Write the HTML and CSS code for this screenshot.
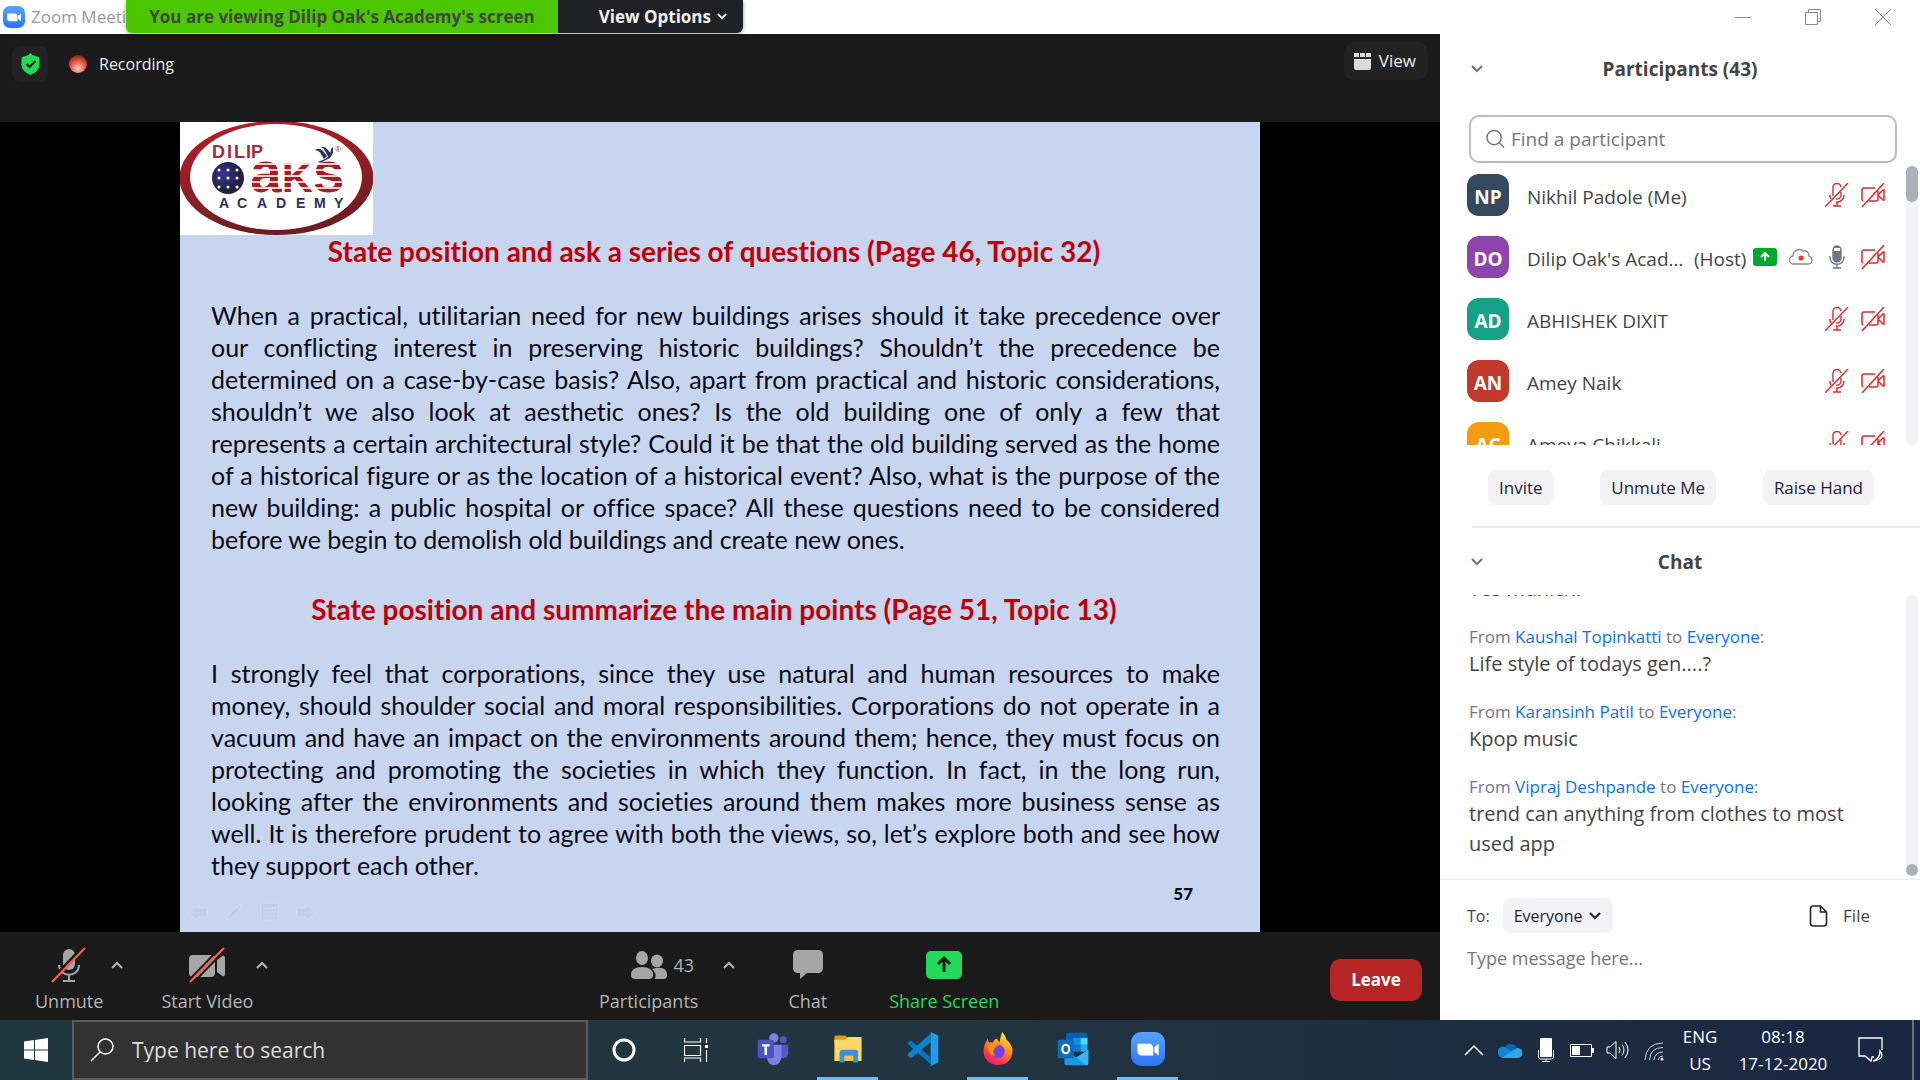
FILE: index.html
```html
<!DOCTYPE html>
<html lang="en">
<head>
<meta charset="utf-8">
<title>Zoom Meeting</title>
<link rel="stylesheet" href="styles.css">
</head>
<body>
<svg class="sprite" aria-hidden="true">
  <symbol id="mic-off" viewBox="0 0 24 24"><g fill="none" stroke="currentColor" stroke-width="1.4"><path d="M8 13V5a4 4 0 0 1 8-1M16 9v3a4 4 0 0 1-5 4M5 12v2l1 2M19 12v1a7 7 0 0 1-8 6M12 19v4M8 23h8M0 24L23 0"/></g></symbol>
  <symbol id="cam-off" viewBox="0 0 24 24"><g fill="none" stroke="currentColor" stroke-width="1.5"><path d="M2 18a2 2 0 0 1-1-2V7a2 2 0 0 1 2-2h11M17 8v8a2 2 0 0 1-2 2H8M17 12l5-5h1v10h-1l-5-5M1 24L23 0"/></g></symbol>
  <symbol id="chev-up" viewBox="0 0 12 8"><path d="M1 7l5-5 5 5" fill="none" stroke="currentColor" stroke-width="2"/></symbol>
  <symbol id="chev-down" viewBox="0 0 12 8"><path d="M1 1l5 5 5-5" fill="none" stroke="currentColor" stroke-width="2.2"/></symbol>
  <symbol id="zoom-logo" viewBox="0 0 32 32"><defs><linearGradient id="zg" x2="0" y2="1"><stop stop-color="#5aa2ff"/><stop offset="1" stop-color="#2f74f7"/></linearGradient></defs><rect width="32" height="32" rx="10" fill="url(#zg)"/><path d="M6 11h11a4 4 0 0 1 4 4v7H10a4 4 0 0 1-4-4zM22 14l4-3v11l-4-3z" fill="#fff"/></symbol>
</svg>

<header class="titlebar">
  <svg class="titlebar-logo"><use href="#zoom-logo"/></svg>
  <span class="titlebar-name">Zoom Meeting</span>
  <div class="share-banner">
    <span class="share-banner-text">You are viewing Dilip Oak's Academy's screen</span>
    <button class="share-banner-menu">View Options <svg class="tiny-chev"><use href="#chev-down"/></svg></button>
  </div>
  <div class="window-buttons">
    <button aria-label="Minimize"><svg viewBox="0 0 16 16"><path d="M0 8.500h16"/></svg></button>
    <button aria-label="Restore"><svg viewBox="0 0 16 16"><path d="M.5 3.500h12v12H.5zM3.500 3.500v-3h12v12h-3"/></svg></button>
    <button aria-label="Close"><svg viewBox="0 0 16 16"><path d="M0 0l16 16M16 0L0 16"/></svg></button>
  </div>
</header>

<main class="meeting">
  <section class="video">
    <div class="video-top">
      <button class="shield" aria-label="Meeting information"><svg viewBox="0 0 18 22"><path d="M9 0l2 2 6 2q1 0 1 2v6q0 6-9 10Q0 18 0 12V6q0-2 1-2l6-2z" fill="#23d959"/><path d="M5 11l3 3 6-6" fill="none" stroke="#1a1a1a" stroke-width="2"/></svg></button>
      <span class="rec-dot"></span>
      <span class="rec-label">Recording</span>
      <button class="view-button"><svg viewBox="0 0 17 17"><path d="M0 0h5v4H0zM6 0h5v4H6zM12 0h5v4h-5zM0 6h17v9q0 2-2 2H2q-2 0-2-2z" fill="#dcdcdc"/></svg>View</button>
    </div>

    <div class="stage">
      <article class="slide">
        <svg class="academy-logo" viewBox="0 0 193 113" role="img" aria-label="Dilip Oak's Academy">
          <defs>
            <linearGradient id="ring" x2=".3" y2="1"><stop stop-color="#b81c28"/><stop offset=".6" stop-color="#8e1f26"/><stop offset="1" stop-color="#6e1c22"/></linearGradient>
            <pattern id="stripes" width="10" height="6" patternUnits="userSpaceOnUse" y="1"><rect width="10" height="6" fill="#f0cfcf"/><rect width="10" height="4" fill="#a81c26"/></pattern>
            <radialGradient id="ball" cx=".35" cy=".4"><stop stop-color="#34349c"/><stop offset="1" stop-color="#232042"/></radialGradient>
          </defs>
          <rect width="193" height="113" fill="#fff"/>
          <ellipse cx="96.500" cy="56" rx="97" ry="57" fill="url(#ring)"/>
          <ellipse cx="96" cy="55" rx="86" ry="53" fill="#fff"/>
          <text class="logo-dilip" x="32 47 54 66 71" y="36">DILIP</text>
          <circle cx="48" cy="56" r="16" fill="url(#ball)"/>
          <g fill="#fff"><circle cx="39" cy="48" r="1.500"/><circle cx="48" cy="48" r="1.500"/><circle cx="57" cy="48" r="1.500"/><circle cx="39" cy="56" r="1.500"/><circle cx="48" cy="56" r="1.500"/><circle cx="57" cy="56" r="1.500"/><circle cx="39" cy="65" r="1.500"/><circle cx="48" cy="65" r="1.500"/><circle cx="57" cy="65" r="1.500"/></g>
          <text class="logo-aks" x="70" y="70">a<tspan class="logo-k">K</tspan>s</text>
          <path d="M135 28q4-3 8 1l4 5-3 3-3-5q-1-3-6-4zM141 25q4-1 7 3l4 5-3 3-4-7q-1-3-4-4zM145 37l5-4 1-6 2-2v6l-3 5-8 4q-2 1-4 0z" fill="#26335c"/>
          <text class="logo-reg" x="155" y="30">®</text>
          <text class="logo-academy" x="39 57 77 96 116 134 154" y="86">ACADEMY</text>
        </svg>
        <h2>State position and ask a series of questions (Page 46, Topic 32)</h2>
        <p>
          <span>When a practical, utilitarian need for new buildings arises should it take precedence over</span>
          <span>our conflicting interest in preserving historic buildings? Shouldn’t the precedence be</span>
          <span>determined on a case-by-case basis? Also, apart from practical and historic considerations,</span>
          <span>shouldn’t we also look at aesthetic ones? Is the old building one of only a few that</span>
          <span>represents a certain architectural style? Could it be that the old building served as the home</span>
          <span>of a historical figure or as the location of a historical event? Also, what is the purpose of the</span>
          <span>new building: a public hospital or office space? All these questions need to be considered</span>
          <span>before we begin to demolish old buildings and create new ones.</span>
        </p>
        <h2>State position and summarize the main points (Page 51, Topic 13)</h2>
        <p>
          <span>I strongly feel that corporations, since they use natural and human resources to make</span>
          <span>money, should shoulder social and moral responsibilities. Corporations do not operate in a</span>
          <span>vacuum and have an impact on the environments around them; hence, they must focus on</span>
          <span>protecting and promoting the societies in which they function. In fact, in the long run,</span>
          <span>looking after the environments and societies around them makes more business sense as</span>
          <span>well. It is therefore prudent to agree with both the views, so, let’s explore both and see how</span>
          <span>they support each other.</span>
        </p>
        <footer class="slide-foot">
          <svg class="slide-tools" viewBox="0 0 128 24"><g fill="#c1ceea" stroke="#d0dbf3"><path d="M1 12l9-8v4h9v9h-9v4zM54 4l-5 9-11 8 6-10zM73 3h17v17H73zM127 12l-9-8v4h-9v9h9v4z"/><path d="M75 8h13M75 12h13M75 16h13"/></g></svg>
          <span class="page-number">57</span>
        </footer>
      </article>
    </div>

    <nav class="toolbar">
      <div class="tool-group">
        <button class="tool"><svg class="tool-icon" viewBox="0 0 36 36"><path d="M18 2a6 6 0 0 1 6 6v9a6 6 0 0 1-12 0V8a6 6 0 0 1 6-6z" fill="#a6a6a6"/><path d="M8 18c0 13 20 13 20 0M18 28v6M12 34h12" fill="none" stroke="#a6a6a6" stroke-width="2"/><path d="M0 33L32 0" stroke="#1a1a1a" stroke-width="3"/><path d="M1 35L34 1" stroke="#ff5a55" stroke-width="2.200"/></svg>Unmute</button>
        <button class="tool-more gap-a" aria-label="Audio options"><svg><use href="#chev-up"/></svg></button>
        <button class="tool gap-b"><svg class="tool-icon" viewBox="0 0 36 36"><path d="M0 12q0-4 4-4h18q4 0 4 4v14q0 4-4 4H4q-4 0-4-4zM28 13l4-3q4-3 4 1v16q0 4-4 1l-4-3z" fill="#a6a6a6"/><path d="M0 33L32 0M4 36L36 3" stroke="#1a1a1a" stroke-width="2"/><path d="M1 35L35 1" stroke="#ff5a55" stroke-width="2.200"/></svg>Start Video</button>
        <button class="tool-more gap-c" aria-label="Video options"><svg><use href="#chev-up"/></svg></button>
      </div>
      <div class="tool-group">
        <button class="tool"><span class="tool-count"><svg class="tool-icon" viewBox="0 0 36 36"><g fill="#a6a6a6"><ellipse cx="11" cy="11" rx="6" ry="7"/><ellipse cx="26" cy="14" rx="6" ry="6.500"/><path d="M0 28q0-8 11-8t11 8q0 4-4 4H4q-4 0-4-4zM21 22q15-4 15 6 0 4-3 4h-9q2-6-3-10z"/></g></svg>43</span>Participants</button>
        <button class="tool-more gap-d" aria-label="Participant options"><svg><use href="#chev-up"/></svg></button>
        <button class="tool gap-e"><svg class="tool-icon" viewBox="0 0 36 36"><path d="M8 3h20q5 0 5 5v13q0 5-5 5H17l-7 6v-6H8q-5 0-5-5V8q0-5 5-5z" fill="#a6a6a6"/></svg>Chat</button>
        <button class="tool share gap-f"><svg class="tool-icon" viewBox="0 0 36 36"><rect y="4" width="36" height="28" rx="5" fill="#23d959"/><path d="M18 25V12M12 17l6-6 6 6" fill="none" stroke="#1a1a1a" stroke-width="3"/></svg>Share Screen</button>
      </div>
      <button class="leave">Leave</button>
    </nav>
  </section>

  <aside class="side">
    <section class="people">
      <header class="side-head"><button aria-label="Collapse participants"><svg class="head-chev"><use href="#chev-down"/></svg></button><h3>Participants (43)</h3></header>
      <label class="find"><svg viewBox="0 0 20 20"><circle cx="8.500" cy="8.500" r="7.500"/><path d="M14 14l5 5"/></svg><input type="text" placeholder="Find a participant" aria-label="Find a participant"></label>
      <div class="scroll-area people-scroll">
        <ul class="people-list">
          <li><span class="avatar navy">NP</span><span class="name">Nikhil Padole (Me)</span><svg class="mute"><use href="#mic-off"/></svg><svg class="mute"><use href="#cam-off"/></svg></li>
          <li><span class="avatar purple">DO</span><span class="name host">Dilip Oak's Academy</span><span class="role">(Host)</span>
            <svg class="status" viewBox="0 0 24 18"><rect width="24" height="18" rx="3" fill="#00a82d"/><path d="M12 13V6M8 9l4-4 4 4" fill="none" stroke="#fff" stroke-width="2"/></svg>
            <svg class="status" viewBox="0 0 24 18"><path d="M5 16a4 4 0 0 1-1-8c0-6 7-8 10-5 4-1 6 2 6 5 4 2 4 8-1 8z" fill="none" stroke="#85858f" stroke-width="1.300"/><circle cx="12" cy="10" r="2.500" fill="#fa3232"/></svg>
            <svg class="mute grey" viewBox="0 0 24 24"><path d="M8 5a4 4 0 0 1 8 0v8a4 4 0 0 1-8 0z" fill="#747487"/><path d="M9 3h6v3H9z" fill="#fff"/><path d="M8 5a4 4 0 0 1 8 0v8a4 4 0 0 1-8 0zM5 11c-1 11 15 11 14 0M12 19v4M8 23h8" fill="none" stroke="#747487" stroke-width="1.300"/></svg>
            <svg class="mute"><use href="#cam-off"/></svg></li>
          <li><span class="avatar teal">AD</span><span class="name">ABHISHEK DIXIT</span><svg class="mute"><use href="#mic-off"/></svg><svg class="mute"><use href="#cam-off"/></svg></li>
          <li><span class="avatar red">AN</span><span class="name">Amey Naik</span><svg class="mute"><use href="#mic-off"/></svg><svg class="mute"><use href="#cam-off"/></svg></li>
          <li><span class="avatar orange">AC</span><span class="name">Ameya Chikkali</span><svg class="mute"><use href="#mic-off"/></svg><svg class="mute"><use href="#cam-off"/></svg></li>
        </ul>
        <div class="track"><div class="thumb"></div></div>
      </div>
      <div class="people-actions"><button class="pill">Invite</button><button class="pill">Unmute Me</button><button class="pill">Raise Hand</button></div>
    </section>

    <section class="chat">
      <header class="side-head chat-head"><button aria-label="Collapse chat"><svg class="head-chev"><use href="#chev-down"/></svg></button><h3>Chat</h3></header>
      <div class="scroll-area chat-scroll">
        <div class="messages">
          <div class="message"><p>Yes munich.</p></div>
          <div class="message"><div class="from">From <a href="#">Kaushal Topinkatti</a> to <a href="#">Everyone</a>:</div><p>Life style of todays gen....?</p></div>
          <div class="message"><div class="from">From <a href="#">Karansinh Patil</a> to <a href="#">Everyone</a>:</div><p>Kpop music</p></div>
          <div class="message"><div class="from">From <a href="#">Vipraj Deshpande</a> to <a href="#">Everyone</a>:</div><p>trend can anything from clothes to most used app</p></div>
        </div>
        <div class="track bottom"><div class="thumb dot"></div></div>
      </div>
      <div class="compose">
        <div class="compose-row">
          <label for="to">To:</label>
          <span class="to-wrap"><select id="to" class="pill"><option>Everyone</option></select><svg class="to-chev"><use href="#chev-down"/></svg></span>
          <button class="file"><svg viewBox="0 0 18 22"><path d="M11 1H4Q1 1 1 4v14q0 3 3 3h10q3 0 3-3V7zM11 1v6h6" fill="none" stroke="#232333" stroke-width="1.600"/></svg>File</button>
        </div>
        <input type="text" class="compose-input" placeholder="Type message here..." aria-label="Message">
      </div>
    </section>
  </aside>
</main>

<footer class="taskbar">
  <button class="start" aria-label="Start"><svg viewBox="0 0 24 24"><path d="M0 3.500l10-1.400v9.400H0zM11 2l13-2v11.500H11zM0 12.500h10v9.400L0 20.500zM11 12.500h13V24l-13-2z" fill="#fff"/></svg></button>
  <label class="search"><svg viewBox="0 0 24 24"><circle cx="15.500" cy="8.500" r="7.500"/><path d="M10 14L1 23"/></svg><input type="text" placeholder="Type here to search" aria-label="Type here to search"></label>
  <button class="sys" aria-label="Cortana"><svg viewBox="0 0 24 24"><circle cx="12" cy="12" r="10" fill="none" stroke="#fff" stroke-width="3"/></svg></button>
  <button class="sys" aria-label="Task View"><svg viewBox="0 0 24 24"><path d="M.5 0v4h16V0M.5 24v-4h16v4M.5 7.500h16v10H.5zM22.500 0v5M22.500 12v12" fill="none" stroke="#fff" stroke-width="1.200"/><rect x="21" y="7" width="3" height="3" fill="#fff"/></svg></button>
  <nav class="apps">
    <button aria-label="Teams"><svg viewBox="0 0 36 40"><circle cx="30" cy="9" r="4" fill="#5059c9"/><path d="M26 15h10v11q-1 5-6 5-4 0-5-3z" fill="#5059c9"/><circle cx="19" cy="7" r="5.500" fill="#7b83eb"/><path d="M11 15h17v14q-1 9-9 10-8-1-8-10z" fill="#7b83eb"/><rect y="9" width="19" height="22" rx="2" fill="#4b53bc"/><path d="M5 14.500h9v2.500h-3v10H8V17H5z" fill="#fff"/></svg></button>
    <button class="open" aria-label="File Explorer"><svg viewBox="0 0 36 40"><path d="M2 6q0-2 2-2h11l3 3v6H2z" fill="#e09f10"/><path d="M2 9h13l3-3h16v28H2z" fill="#ffd766"/><path d="M8 36V25q0-4 4-4h14q4 0 4 4v11h-6v-8H14v8z" fill="#3c8fd9"/><path d="M14 28h10v6H14z" fill="#f6be45"/></svg></button>
    <button aria-label="Visual Studio Code"><svg viewBox="0 0 36 40"><path d="M0 13l4-3 23 20v8L1 15z" fill="#0078c6"/><path d="M0 28l4 3L27 12V2L1 25z" fill="#0a84cf"/><path d="M27 0l9 4v32l-9 4z" fill="#1f9cf0"/></svg></button>
    <button class="open" aria-label="Firefox"><svg viewBox="0 0 36 40"><defs><linearGradient id="fx" x1=".8" x2=".3" y2="1"><stop stop-color="#fff14a"/><stop offset=".4" stop-color="#ff9a1f"/><stop offset=".8" stop-color="#ff3647"/><stop offset="1" stop-color="#e31587"/></linearGradient></defs><path d="M23 0q4 4 5 9 8 6 7 15-2 14-17 15Q2 38 1 23q0-8 5-15l1 4 5 0q2-4 5-4 2 4 3 4 1-8 3-12z" fill="url(#fx)"/><circle cx="18" cy="23" r="8" fill="#7b3fe0"/><path d="M6 17q6-4 13-1-4 1-6 5-2 3 2 7-9-1-9-11z" fill="#ff980e"/></svg></button>
    <button aria-label="Outlook"><svg viewBox="0 0 36 40"><path d="M10 3q0-2 2-2h21q2 0 2 2v20H10z" fill="#0a5fb4"/><path d="M18 7h9v8h-9z" fill="#1490df"/><path d="M27 7h8v8h-8z" fill="#50d9ff"/><path d="M18 15h9v8h-9z" fill="#0f78d4"/><path d="M27 15h8v8h-8z" fill="#28a8ea"/><path d="M8 21l14 9 14-9v16q0 2-2 2H10q-2 0-2-2z" fill="#1c98e8"/><path d="M36 21v16q0 2-2 2L22 30z" fill="#35b8f1"/><rect y="9" width="19" height="22" rx="2" fill="#0f6cbd"/><ellipse cx="9.500" cy="20" rx="4" ry="5" fill="none" stroke="#fff" stroke-width="2.500"/></svg></button>
    <button class="open" aria-label="Zoom"><svg><use href="#zoom-logo"/></svg></button>
  </nav>
  <div class="tray">
    <svg class="tray-icon" viewBox="0 0 24 24"><path d="M3 17l9-9 9 9" fill="none" stroke="#fff" stroke-width="1.500"/></svg>
    <svg class="tray-icon" viewBox="0 0 24 24"><path d="M6 11a7 7 0 0 1 13-1l-1 8H5z" fill="#0a64b8"/><path d="M0 15a5 5 0 0 1 7-6l11 8-13 3a5 5 0 0 1-5-5z" fill="#1484d8"/><path d="M4 20l10-7 5-3a5 5 0 0 1 1 10z" fill="#2aa6ea"/></svg>
    <svg class="tray-icon" viewBox="0 0 24 24"><rect x="6" width="12" height="19" rx="1" fill="#fff"/><path d="M4.500 12v7q0 2 2 2h11q2 0 2-2v-7M12 21v2.500M8 23.500h8" fill="none" stroke="#fff"/></svg>
    <svg class="tray-icon" viewBox="0 0 24 24"><path d="M.5 6.500h21v12H.5z" fill="none" stroke="#fff"/><path d="M2 8h8v9H2zM22 10h2v5h-2z" fill="#fff"/></svg>
    <svg class="tray-icon" viewBox="0 0 24 24"><path d="M1 9h3l6-5.500v17L4 15H1zM13 9q2 3 0 6M16 6.500q4 5.500 0 11M19 4q6 8 0 16" fill="none" stroke="#fff"/></svg>
    <svg class="tray-icon" viewBox="0 0 24 24"><path d="M3 22Q4 5 21 5M7.500 22Q8 9.500 21 9.500M12 22q1-8 9-8M16 22q1-4 5-4" fill="none" stroke="#ccd2dc"/><circle cx="20" cy="21" r="1.500" fill="#fff"/></svg>
    <span class="tray-text lang">ENG<br>US</span>
    <span class="tray-text clock">08:18<br>17-12-2020</span>
    <svg class="tray-icon note" viewBox="0 0 26 26"><path d="M16 20h-2l-1 4-6-5H1V1h23v12" fill="none" stroke="#fff" stroke-width="1.300"/><path d="M22 14q6 8-7 10 7-2 7-10z" fill="none" stroke="#fff" stroke-width="1.300"/></svg>
    <span class="peek"></span>
  </div>
</footer>
</body>
</html>
```
FILE: styles.css
```css
* { box-sizing: border-box; }

body {
  margin: 0;
  min-height: 100vh;
  display: flex;
  flex-direction: column;
  background: #fff;
  color: #444;
  font: 18px/24px "Open Sans", "Noto Sans", sans-serif;
}

button, input, select {
  margin: 0;
  padding: 0;
  border: 0;
  background: none;
  color: inherit;
  font: inherit;
  outline: none;
}

h2, h3, p, ul { margin: 0; padding: 0; }
a { color: #0e71eb; text-decoration: none; }
svg { display: block; flex: none; }
.sprite { position: absolute; width: 0; height: 0; }

/* Window title bar */
.titlebar {
  position: relative;
  display: flex;
  align-items: center;
  height: 34px;
  padding: 0 2px 0 3px;
}
.titlebar-logo { width: 22px; height: 22px; }
.titlebar-name { margin-left: 6px; color: #999; font-size: 17px; }
.share-banner {
  position: absolute;
  left: 126px;
  top: 0;
  display: flex;
  height: 33px;
  border-radius: 0 0 6px 6px;
  overflow: hidden;
  font-size: 17px;
  font-weight: 700;
  line-height: 33px;
  box-shadow: 0 1px 4px rgba(0, 0, 0, .4);
}
.share-banner-text { width: 432px; background: #4bc800; text-align: center; }
.share-banner-menu {
  display: flex;
  align-items: center;
  justify-content: flex-end;
  gap: 6px;
  width: 185px;
  padding-right: 16px;
  background: #202124;
  color: #f2f2f2;
}
.tiny-chev { width: 10px; height: 7px; }
.window-buttons { display: flex; margin-left: auto; }
.window-buttons button { display: grid; place-items: center; width: 70px; height: 34px; }
.window-buttons svg { width: 16px; height: 16px; fill: none; stroke: #8c8c8c; }

/* Meeting area */
.meeting { flex: 1; display: flex; }
.video { flex: 1; display: flex; flex-direction: column; background: #1a1a1a; color: #eee; }
.video-top { display: flex; height: 88px; padding: 12px 12px 0; }
.shield { display: grid; place-items: center; width: 36px; height: 36px; border-radius: 8px; background: #222; }
.shield svg { width: 19px; height: 22px; }
.rec-dot {
  width: 18px;
  height: 18px;
  margin: 9px 12px 0 21px;
  border-radius: 50%;
  background: radial-gradient(circle at 50% 75%, #ffd0c0 0, #e0523c 50%, #a32a20 75%, #5a2420 100%);
}
.rec-label { line-height: 36px; font-size: 16px; }
.view-button {
  display: flex;
  align-items: center;
  gap: 8px;
  height: 38px;
  margin: -4px 0 0 auto;
  padding: 0 12px 0 10px;
  border-radius: 10px;
  background: #222;
  font-size: 17px;
}
.view-button svg { width: 17px; height: 17px; }

.stage { flex: 1; display: flex; justify-content: center; background: #000; }
.slide {
  display: flex;
  flex-direction: column;
  width: 75%;
  background: #c8d5ef;
  color: #0a0a14;
  font: 25px/32px Lato, "Open Sans", sans-serif;
  font-variant-ligatures: none;
}
.academy-logo { width: 193px; height: 113px; }
.logo-dilip { font: 700 18px "Liberation Sans", sans-serif; fill: #a32a3a; }
.logo-aks { font: 700 57px "Liberation Sans", sans-serif; fill: url(#stripes); }
.logo-k { font-size: 43px; }
.logo-academy { font: 700 14px "Liberation Sans", sans-serif; fill: #2c2c66; }
.logo-reg { font: 8px "Liberation Sans", sans-serif; fill: #555; }
.slide h2 { padding-right: 12px; color: #c00008; font-size: 28px; line-height: 32px; text-align: center; }
.slide p { padding: 32px 40px 0 31px; white-space: nowrap; }
.slide p + h2 { margin-top: 38px; }
.slide p span { display: block; text-align: justify; text-align-last: justify; }
.slide p span:last-child { text-align-last: left; }
.slide-foot { display: flex; justify-content: space-between; margin-top: auto; padding: 0 67px 8px 8px; }
.slide-tools { width: 128px; height: 24px; }
.page-number { margin-top: -22px; font-size: 17px; font-weight: 900; }

/* Meeting toolbar */
.toolbar {
  display: flex;
  justify-content: space-between;
  align-items: center;
  height: 88px;
  padding: 8px 18px 0 35px;
}
.tool-group { display: flex; align-items: flex-start; }
.tool { display: flex; flex-direction: column; align-items: center; gap: 6px; color: #b4b4b4; font-size: 18px; }
.tool-icon { width: 36px; height: 36px; }
.tool-count { display: flex; align-items: center; gap: 6px; margin-left: 28px; }
.tool-more { display: grid; place-items: center; width: 12px; height: 36px; color: #b4b4b4; }
.tool-more svg { width: 12px; height: 8px; }
.gap-a { margin-left: 8px; }
.gap-b { margin-left: 38px; }
.gap-c { margin-left: 3px; }
.gap-d { margin-left: 25px; }
.gap-e { margin-left: 53px; }
.gap-f { margin-left: 62px; }
.share { color: #23d959; }
.leave { width: 92px; height: 42px; border-radius: 10px; background: #b82525; color: #fff; font-size: 17px; font-weight: 700; }

/* Side panel */
.side { display: flex; flex-direction: column; width: 25%; }
.side-head { position: relative; display: flex; align-items: center; justify-content: center; height: 70px; }
.side-head button { position: absolute; left: 31px; }
.side-head h3 { font-size: 19px; }
.head-chev { width: 12px; height: 8px; color: #747487; }
.find {
  display: flex;
  align-items: center;
  gap: 6px;
  height: 48px;
  margin: 11px 23px 0 29px;
  padding: 0 15px;
  border: 2px solid #babacc;
  border-radius: 10px;
}
.find svg { width: 19px; height: 20px; fill: none; stroke: #747487; stroke-width: 1.500; }
.find input { flex: 1; font-size: 19px; }
input::placeholder { color: #747487; opacity: 1; }

.scroll-area { display: flex; overflow: hidden; }
.people-scroll { height: 279px; margin-top: 3px; padding-right: 2px; }
.people-list { flex: 1; min-width: 0; padding: 8px 21px 0 27px; list-style: none; }
.people-list li { display: flex; align-items: center; height: 42px; margin-bottom: 20px; }
.avatar { width: 42px; height: 42px; margin-right: 18px; border-radius: 12px; color: #fff; font-size: 19px; font-weight: 700; line-height: 46px; text-align: center; }
.navy { background: #34495e; }
.purple { background: #8e44ad; }
.teal { background: #16a085; }
.red { background: #c0392b; }
.orange { background: #f39c12; }
.name, .role { padding-top: 4px; font-size: 19px; line-height: 30px; }
.name { flex: 1; overflow: hidden; text-overflow: ellipsis; white-space: nowrap; }
.host { flex: none; width: 160px; }
.role { margin: 0 auto 0 7px; }
.mute { width: 24px; height: 24px; margin-left: 12px; color: #e02828; }
.status { width: 24px; height: 18px; margin-left: 6px; }
.status + .status { margin-left: 12px; }
.track { width: 12px; border-radius: 6px; background: #f2f2f7; }
.thumb { height: 36px; border-radius: 6px; background: #aeaeb8; }
.dot { height: 12px; }
.bottom { display: flex; flex-direction: column; justify-content: flex-end; margin-bottom: 3px; }

.people-actions { display: flex; justify-content: space-between; padding: 25px 46px 21px 48px; }
.pill { height: 35px; padding: 0 11px; border-radius: 8px; background: #f2f2f7; color: #232333; font-size: 17px; }
.chat { flex: 1; display: flex; flex-direction: column; }
.chat::before { content: ""; height: 2px; margin-left: 32px; background: #ededf0; }
.chat-head { height: 67px; }
.chat-scroll { height: 284px; padding-right: 2px; }
.messages { flex: 1; display: flex; flex-direction: column; justify-content: flex-end; gap: 21px; padding: 0 40px 20px 29px; }
.message p { font-size: 20px; line-height: 30px; }
.from { color: #747487; font-size: 17px; }
.compose { flex: 1; padding: 18px 50px 0 27px; border-top: 1px solid #ededf0; }
.compose-row { display: flex; align-items: center; font-size: 16px; }
.to-wrap { position: relative; margin-left: 13px; }
.to-wrap select { display: block; width: 110px; font-size: 16px; appearance: none; }
.to-chev { position: absolute; right: 12px; top: 14px; width: 12px; height: 8px; color: #232333; pointer-events: none; }
.file { display: flex; align-items: center; gap: 15px; margin-left: auto; font-size: 17px; }
.file svg { width: 19px; height: 22px; }
.compose-input { display: block; width: 100%; height: 30px; margin-top: 10px; font-size: 18px; }

/* Windows taskbar */
.taskbar { display: flex; height: 60px; background: linear-gradient(90deg, #203740, #22343f 50%, #1e2f40 70%, #1a2642); color: #fff; }
.start { display: grid; place-items: center; width: 72px; }
.start svg, .sys svg { width: 24px; height: 24px; }
.search { display: flex; align-items: center; gap: 18px; width: 516px; padding: 0 16px; border: 2px solid #5c5c5c; background: #323232; }
.search svg { width: 24px; height: 24px; fill: none; stroke: #fff; stroke-width: 1.500; }
.search input { flex: 1; font-size: 21px; }
.search input::placeholder { color: #ddd; }
.sys { display: grid; place-items: center; width: 72px; }
.apps { display: flex; gap: 14px; margin-left: 10px; }
.apps button { display: grid; place-items: center; width: 61px; border-bottom: 3px solid transparent; }
.apps .open { border-color: #76b9ed; }
.apps svg { width: 34px; height: 34px; }
.tray { display: flex; align-items: center; margin-left: auto; }
.tray-icon { width: 24px; height: 24px; margin-right: 12px; }
.tray-text { font-size: 17px; line-height: 27px; text-align: center; }
.lang { width: 44px; }
.clock { width: 122px; }
.note { width: 26px; height: 26px; margin: 0 28px 0 14px; }
.peek { align-self: stretch; width: 8px; border-left: 2px solid #6a7384; }
```
